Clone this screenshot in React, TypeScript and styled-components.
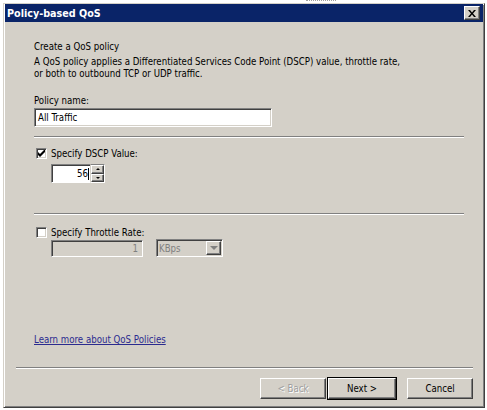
import React from "react";
import styled, { createGlobalStyle } from "styled-components";

const GlobalStyle = createGlobalStyle`
	html,
	body {
		margin: 0;
		padding: 0;
		background: #ffffff;
	}

	body {
		font-family: "DejaVu Sans Condensed", "DejaVu Sans", sans-serif;
		font-size: 9.6px;
		color: #000000;
	}
`;

const sunken = `
	border: 1px solid;
	border-color: #808080 #ffffff #ffffff #808080;
	box-shadow: inset 1px 1px 0 #404040, inset -1px -1px 0 #d4d0c8;
`;

const raised = `
	border: 1px solid;
	border-color: #ffffff #404040 #404040 #ffffff;
	box-shadow: inset -1px -1px 0 #808080;
`;

class App extends React.Component {
	render() {
		return (
			<>
				<GlobalStyle />
				<TopStrip>
					<Grip />
				</TopStrip>
				<Window>
					<TitleBar>
						<Title>Policy-based QoS</Title>
						<CloseButton>
							<svg width="8" height="7" viewBox="0 0 8 7">
								<path d="M0 0h2l2 2.5L6 0h2L5 3.5 8 7H6L4 4.5 2 7H0l3-3.5z" fill="#000" />
							</svg>
						</CloseButton>
					</TitleBar>

					<Body>
						<Heading>Create a QoS policy</Heading>
						<Description>
							A QoS policy applies a Differentiated Services Code Point (DSCP) value, throttle rate,
							<br />
							or both to outbound TCP or UDP traffic.
						</Description>

						<FieldLabel>Policy name:</FieldLabel>
						<TextBox>All Traffic</TextBox>

						<Separator $top={9} />

						<CheckRow $top={9}>
							<CheckBox>
								<svg width="7" height="7" viewBox="0 0 7 7">
									<path d="M0 2v3l2 2 5-5V-1L2 4z" fill="#000" />
								</svg>
							</CheckBox>
							<span>Specify DSCP Value:</span>
						</CheckRow>

						<Indented $top={4}>
							<SpinBox>
								<SpinInput>
									56
									<Caret />
								</SpinInput>
								<SpinButtons>
									<SpinButton>
										<Arrow $up />
									</SpinButton>
									<SpinButton>
										<Arrow />
									</SpinButton>
								</SpinButtons>
							</SpinBox>
						</Indented>

						<Separator $top={30} />

						<CheckRow $top={11}>
							<CheckBox />
							<span>Specify Throttle Rate:</span>
						</CheckRow>

						<Indented $top={0}>
							<DisabledInput>1</DisabledInput>
							<DisabledSelect>
								<span>KBps</span>
								<SelectButton>
									<Arrow $muted />
								</SelectButton>
							</DisabledSelect>
						</Indented>

						<HelpLink href="#">Learn more about QoS Policies</HelpLink>
					</Body>

					<Footer>
						<Separator $full />
						<ButtonRow>
							<DialogButton disabled>&lt; Back</DialogButton>
							<DialogButton $default>Next &gt;</DialogButton>
							<DialogButton $gap={9}>Cancel</DialogButton>
						</ButtonRow>
					</Footer>
				</Window>
			</>
		);
	}
}
export default App;

const TopStrip = styled.div`
	height: 3px;
	display: flex;
`;

const Grip = styled.div`
	margin-left: 306px;
	width: 30px;
	height: 1px;
	border-top: 1px dotted #a0a0a0;
`;

const Window = styled.div`
	margin-left: 3px;
	width: 482px;
	height: 405px;
	box-sizing: border-box;

	display: flex;
	flex-direction: column;

	background: #d4d0c8;
	border: 1px solid;
	border-color: #d4d0c8 #404040 #404040 #d4d0c8;
	box-shadow: inset 1px 1px 0 #ffffff, inset -1px -1px 0 #808080;
`;

const TitleBar = styled.div`
	margin: 0 1px;
	height: 18px;

	display: flex;
	align-items: center;
	justify-content: space-between;

	background: #0a2468;
	padding: 0 3px 0 2px;
`;

const Title = styled.div`
	color: #ffffff;
	font-weight: bold;
	font-size: 10.7px;
`;

const CloseButton = styled.div`
	width: 16px;
	height: 14px;
	box-sizing: border-box;

	display: flex;
	align-items: center;
	justify-content: center;

	background: #d4d0c8;
	${raised}
`;

const Body = styled.div`
	flex: 1;

	display: flex;
	flex-direction: column;

	padding: 18px 19px 0 30px;
`;

const Heading = styled.div`
	line-height: 13px;
`;

const Description = styled.div`
	margin-top: 3px;
	line-height: 12px;
`;

const FieldLabel = styled.div`
	margin-top: 14px;
	line-height: 13px;
`;

const TextBox = styled.div`
	margin-top: 1px;
	width: 238px;
	height: 19px;
	box-sizing: border-box;

	display: flex;
	align-items: center;

	padding-left: 3px;
	background: #ffffff;
	${sunken}
`;

const Separator = styled.div<{ $top?: number; $full?: boolean }>`
	margin-top: ${(p) => p.$top || 0}px;
	width: ${(p) => (p.$full ? "auto" : "430px")};
	height: 0;

	border-top: 1px solid #808080;
	border-bottom: 1px solid #ffffff;
`;

const CheckRow = styled.div<{ $top?: number }>`
	margin-top: ${(p) => p.$top || 0}px;

	display: flex;
	align-items: center;
	gap: 4px;

	line-height: 13px;
`;

const CheckBox = styled.div`
	margin-left: 2px;
	width: 11px;
	height: 11px;
	box-sizing: border-box;

	display: flex;
	align-items: center;
	justify-content: center;

	background: #ffffff;
	${sunken}
`;

const Indented = styled.div<{ $top?: number }>`
	margin-top: ${(p) => p.$top || 0}px;
	padding-left: 17px;

	display: flex;
	align-items: center;
	gap: 13px;
`;

const SpinBox = styled.div`
	display: flex;
`;

const SpinInput = styled.div`
	width: 39px;
	height: 19px;
	box-sizing: border-box;

	display: flex;
	align-items: center;
	justify-content: flex-end;

	padding-right: 1px;
	background: #ffffff;
	${sunken}
	border-right: none;
	box-shadow: inset 1px 1px 0 #404040;
`;

const Caret = styled.span`
	width: 1px;
	height: 12px;
	background: #000000;
`;

const SpinButtons = styled.div`
	width: 15px;
	height: 19px;
	box-sizing: border-box;

	display: flex;
	flex-direction: column;

	border: 1px solid;
	border-color: #808080 #ffffff #ffffff #d4d0c8;
`;

const SpinButton = styled.div`
	flex: 1;

	display: flex;
	align-items: center;
	justify-content: center;

	background: #d4d0c8;
	${raised}
`;

const Arrow = styled.span<{ $up?: boolean; $muted?: boolean }>`
	width: 0;
	height: 0;

	border-left: ${(p) => (p.$muted ? 4 : 2)}px solid transparent;
	border-right: ${(p) => (p.$muted ? 4 : 2)}px solid transparent;
	${(p) =>
		p.$up
			? `border-bottom: 2px solid #000000;`
			: `border-top: ${p.$muted ? 4 : 2}px solid ${p.$muted ? "#808080" : "#000000"};`}
`;

const DisabledInput = styled.div`
	width: 92px;
	height: 17px;
	box-sizing: border-box;

	display: flex;
	align-items: center;
	justify-content: flex-end;

	padding-right: 4px;
	color: #808080;
	background: #d4d0c8;
	${sunken}
`;

const DisabledSelect = styled.div`
	width: 67px;
	height: 18px;
	box-sizing: border-box;

	display: flex;
	align-items: center;
	justify-content: space-between;

	padding-left: 2px;
	color: #808080;
	background: #d4d0c8;
	${sunken}
`;

const SelectButton = styled.div`
	width: 15px;
	height: 14px;
	box-sizing: border-box;

	display: flex;
	align-items: center;
	justify-content: center;

	margin-right: 1px;
	background: #d4d0c8;
	${raised}
`;

const HelpLink = styled.a`
	margin-top: auto;
	margin-bottom: 21px;
	align-self: flex-start;

	line-height: 13px;
	color: #2b2b8f;
	text-decoration: underline;
`;

const Footer = styled.div`
	padding: 0 11px 8px 12px;
`;

const ButtonRow = styled.div`
	margin-top: 9px;

	display: flex;
	justify-content: flex-end;
	gap: 2px;
`;

const DialogButton = styled.button<{ $default?: boolean; $gap?: number }>`
	margin-left: ${(p) => p.$gap || 0}px;
	width: ${(p) => (p.$default ? 68 : 66)}px;
	height: 21px;
	box-sizing: border-box;
	padding: 0;

	font-family: inherit;
	font-size: 9.6px;
	color: #000000;
	background: #d4d0c8;
	border: 1px solid;
	border-color: #ffffff #404040 #404040 #ffffff;
	box-shadow: inset -1px -1px 0 #808080;
	outline: ${(p) => (p.$default ? "1px solid #000000" : "none")};
	outline-offset: 0;

	&:disabled {
		color: #a0a0a0;
		text-shadow: 1px 1px 0 #ffffff;
	}
`;
